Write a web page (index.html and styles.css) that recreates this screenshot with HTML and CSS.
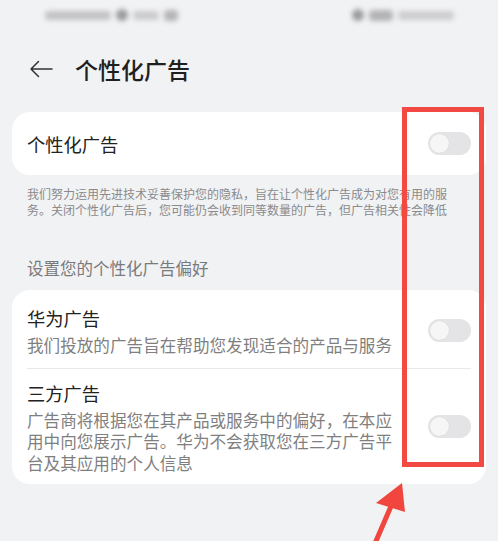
FILE: index.html
```html
<!DOCTYPE html>
<html lang="zh-CN">
<head>
<meta charset="utf-8">
<title>个性化广告</title>
<link rel="stylesheet" href="styles.css">
</head>
<body>
<div class="screen">
  <div class="statusbar">
    <div class="sb-left">
      <span class="blob b1"></span><span class="blob dot"></span><span class="blob b2"></span><span class="blob b3"></span>
    </div>
    <div class="sb-right">
      <span class="blob dot"></span><span class="blob b4"></span><span class="blob b5"></span>
    </div>
  </div>

  <div class="header">
    <svg class="back" width="24" height="18" viewBox="0 0 24 18">
      <path d="M23 9H2 M9.5 1.5L2 9l7.5 7.5" fill="none" stroke="#333333" stroke-width="1.5" stroke-linecap="round" stroke-linejoin="round"/>
    </svg>
    <h1 class="title">个性化广告</h1>
  </div>

  <main class="content">
    <section class="card card-single">
      <div class="row row-single">
        <div class="row-text"><div class="row-title">个性化广告</div></div>
        <span class="toggle"><span class="knob"></span></span>
      </div>
    </section>

    <p class="note">我们努力运用先进技术妥善保护您的隐私，旨在让个性化广告成为对您有用的服务。关闭个性化广告后，您可能仍会收到同等数量的广告，但广告相关性会降低</p>

    <h2 class="section-title">设置您的个性化广告偏好</h2>

    <section class="card">
      <div class="row">
        <div class="row-text">
          <div class="row-title">华为广告</div>
          <div class="row-sub">我们投放的广告旨在帮助您发现适合的产品与服务</div>
        </div>
        <span class="toggle"><span class="knob"></span></span>
      </div>
      <div class="divider"></div>
      <div class="row row-last">
        <div class="row-text">
          <div class="row-title">三方广告</div>
          <div class="row-sub">广告商将根据您在其产品或服务中的偏好，在本应用中向您展示广告。华为不会获取您在三方广告平台及其应用的个人信息</div>
        </div>
        <span class="toggle"><span class="knob"></span></span>
      </div>
    </section>
  </main>

  <div class="highlight"></div>
  <svg class="pointer" width="498" height="541" viewBox="0 0 498 541">
    <line x1="373" y1="548" x2="395" y2="497" stroke="#f0463e" stroke-width="5" stroke-linecap="round"/>
    <polygon points="402,483 376,503 405,512" fill="#f0463e"/>
  </svg>
</div>
</body>
</html>
```

FILE: styles.css
```css
* { box-sizing: border-box; margin: 0; padding: 0; }

html, body {
  width: 498px;
  height: 541px;
  overflow: hidden;
  background: #f1f2f4;
}

body {
  font-family: "Noto Sans CJK SC", "Noto Sans", sans-serif;
  color: #1f1f1f;
}

.screen {
  position: relative;
  width: 498px;
  height: 541px;
}

.statusbar {
  height: 36px;
  display: flex;
  justify-content: space-between;
  align-items: center;
  padding: 0 44px 6px 45px;
}

.sb-left, .sb-right {
  display: flex;
  align-items: center;
  gap: 5px;
  filter: blur(2.5px);
}

.blob {
  display: block;
  height: 9px;
  border-radius: 4px;
  background: #b9b9bb;
}
.b1 { width: 66px; background: #c2c2c4; }
.dot { width: 12px; height: 12px; border-radius: 50%; background: #9a9a9c; }
.b2 { width: 26px; background: #cbcbcd; }
.b3 { width: 14px; height: 11px; background: #b4b4b6; }
.b4 { width: 24px; height: 11px; background: #b3b3b5; }
.b5 { width: 56px; background: #cdcdcf; }

.header {
  height: 66px;
  display: flex;
  align-items: center;
  padding-left: 29px;
}

.back { display: block; flex: none; }

.title {
  margin-left: 22px;
  font-size: 23px;
  font-weight: 500;
  line-height: 30px;
  color: #1f1f1f;
}

.content {
  padding: 0 12px;
}

.card {
  margin-top: 10px;
  background: #ffffff;
  border-radius: 18px;
}

.card-single {
  height: 63px;
}

.row {
  display: flex;
  align-items: center;
  padding: 15px 15px 11px 15px;
}

.row-single {
  height: 63px;
  padding-top: 0;
  padding-bottom: 0;
}

.row-last {
  padding-top: 11px;
  padding-bottom: 10px;
}

.row-text {
  flex: 1;
  min-width: 0;
  margin-right: 30px;
}

.row-title {
  font-size: 18.3px;
  line-height: 26px;
  color: #222222;
}

.row-sub {
  margin-top: 4px;
  font-size: 16.6px;
  line-height: 21.5px;
  color: #7f7f7f;
}

.divider {
  height: 1px;
  margin: 0 15px;
  background: #e9e9eb;
}

.toggle {
  position: relative;
  flex: none;
  width: 43px;
  height: 23px;
  border-radius: 12px;
  background: #e4e4e6;
}

.knob {
  position: absolute;
  left: 2px;
  top: 2px;
  width: 19px;
  height: 19px;
  border-radius: 50%;
  background: #f6f6f7;
  box-shadow: 0 0 1px rgba(0,0,0,0.12);
}

.note {
  margin-top: 11px;
  padding: 0 36px 0 15px;
  font-size: 12px;
  line-height: 16px;
  color: #8a8a8c;
}

.section-title {
  margin-top: 39px;
  padding-left: 15px;
  font-size: 16.5px;
  font-weight: 400;
  line-height: 22px;
  color: #7a7a7c;
}

.section-title + .card {
  margin-top: 11px;
}

.highlight {
  position: absolute;
  left: 402px;
  top: 107px;
  width: 82px;
  height: 360px;
  border: 5px solid #f24a42;
}

.pointer {
  position: absolute;
  left: 0;
  top: 0;
  pointer-events: none;
}
```
